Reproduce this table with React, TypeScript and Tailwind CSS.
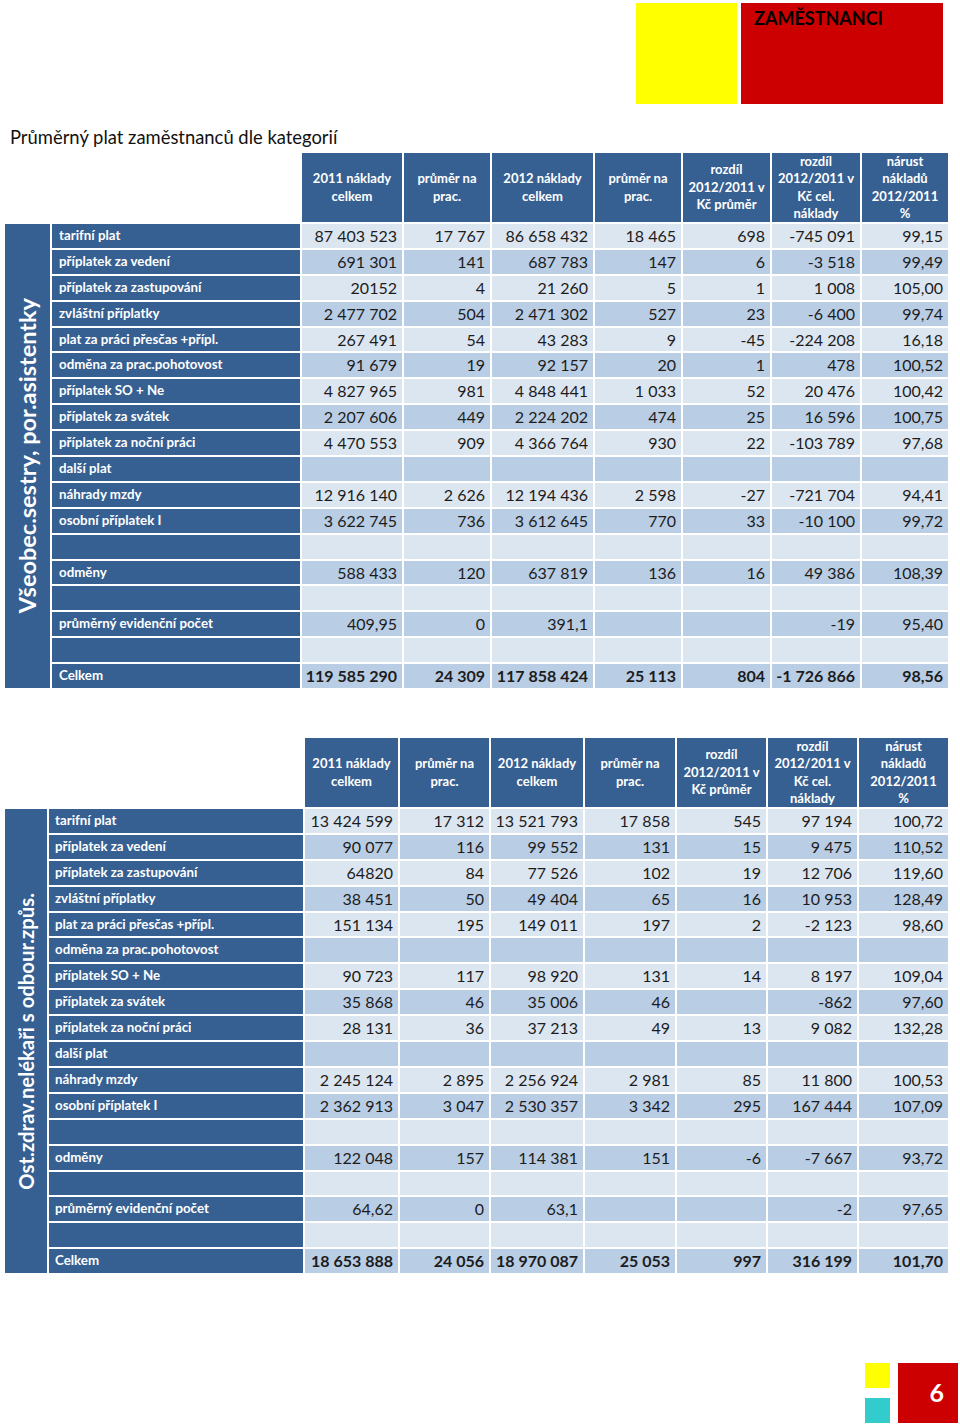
import React from 'react';

type Row = {
  label: string;
  values: string[];
  total?: boolean;
};

const NONE = ['', '', '', '', '', '', ''];

const nurses: Row[] = [
  { label: 'tarifní plat', values: ['87 403 523', '17 767', '86 658 432', '18 465', '698', '-745 091', '99,15'] },
  { label: 'příplatek za vedení', values: ['691 301', '141', '687 783', '147', '6', '-3 518', '99,49'] },
  { label: 'příplatek za zastupování', values: ['20152', '4', '21 260', '5', '1', '1 008', '105,00'] },
  { label: 'zvláštní příplatky', values: ['2 477 702', '504', '2 471 302', '527', '23', '-6 400', '99,74'] },
  { label: 'plat za práci přesčas +přípl.', values: ['267 491', '54', '43 283', '9', '-45', '-224 208', '16,18'] },
  { label: 'odměna za prac.pohotovost', values: ['91 679', '19', '92 157', '20', '1', '478', '100,52'] },
  { label: 'příplatek SO + Ne', values: ['4 827 965', '981', '4 848 441', '1 033', '52', '20 476', '100,42'] },
  { label: 'příplatek za svátek', values: ['2 207 606', '449', '2 224 202', '474', '25', '16 596', '100,75'] },
  { label: 'příplatek za noční práci', values: ['4 470 553', '909', '4 366 764', '930', '22', '-103 789', '97,68'] },
  { label: 'další plat', values: NONE },
  { label: 'náhrady mzdy', values: ['12 916 140', '2 626', '12 194 436', '2 598', '-27', '-721 704', '94,41'] },
  { label: 'osobní příplatek I', values: ['3 622 745', '736', '3 612 645', '770', '33', '-10 100', '99,72'] },
  { label: '', values: NONE },
  { label: 'odměny', values: ['588 433', '120', '637 819', '136', '16', '49 386', '108,39'] },
  { label: '', values: NONE },
  { label: 'průměrný evidenční počet', values: ['409,95', '0', '391,1', '', '', '-19', '95,40'] },
  { label: '', values: NONE },
  { label: 'Celkem', values: ['119 585 290', '24 309', '117 858 424', '25 113', '804', '-1 726 866', '98,56'], total: true },
];

const others: Row[] = [
  { label: 'tarifní plat', values: ['13 424 599', '17 312', '13 521 793', '17 858', '545', '97 194', '100,72'] },
  { label: 'příplatek za vedení', values: ['90 077', '116', '99 552', '131', '15', '9 475', '110,52'] },
  { label: 'příplatek za zastupování', values: ['64820', '84', '77 526', '102', '19', '12 706', '119,60'] },
  { label: 'zvláštní příplatky', values: ['38 451', '50', '49 404', '65', '16', '10 953', '128,49'] },
  { label: 'plat za práci přesčas +přípl.', values: ['151 134', '195', '149 011', '197', '2', '-2 123', '98,60'] },
  { label: 'odměna za prac.pohotovost', values: NONE },
  { label: 'příplatek SO + Ne', values: ['90 723', '117', '98 920', '131', '14', '8 197', '109,04'] },
  { label: 'příplatek za svátek', values: ['35 868', '46', '35 006', '46', '', '-862', '97,60'] },
  { label: 'příplatek za noční práci', values: ['28 131', '36', '37 213', '49', '13', '9 082', '132,28'] },
  { label: 'další plat', values: NONE },
  { label: 'náhrady mzdy', values: ['2 245 124', '2 895', '2 256 924', '2 981', '85', '11 800', '100,53'] },
  { label: 'osobní příplatek I', values: ['2 362 913', '3 047', '2 530 357', '3 342', '295', '167 444', '107,09'] },
  { label: '', values: NONE },
  { label: 'odměny', values: ['122 048', '157', '114 381', '151', '-6', '-7 667', '93,72'] },
  { label: '', values: NONE },
  { label: 'průměrný evidenční počet', values: ['64,62', '0', '63,1', '', '', '-2', '97,65'] },
  { label: '', values: NONE },
  { label: 'Celkem', values: ['18 653 888', '24 056', '18 970 087', '25 053', '997', '316 199', '101,70'], total: true },
];

const headers: string[][] = [
  ['2011 náklady', 'celkem'],
  ['průměr na', 'prac.'],
  ['2012 náklady', 'celkem'],
  ['průměr na', 'prac.'],
  ['rozdíl', '2012/2011 v', 'Kč průměr'],
  ['rozdíl', '2012/2011 v', 'Kč cel.', 'náklady'],
  ['nárust', 'nákladů', '2012/2011', '%'],
];

interface TableProps {
  title: string;
  titleClass: string;
  gridClass: string;
  labelPad: string;
  rows: Row[];
}

function CostTable({ title, titleClass, gridClass, labelPad, rows }: TableProps) {
  return <div className={gridClass}>
      <div className="col-span-2"></div>
      {headers.map((lines, i) => <div key={i} className="bg-[#376092] flex flex-col items-center justify-center text-white font-bold text-[13px] leading-[17.5px] text-center">
          {lines.map(l => <span key={l}>{l}</span>)}
        </div>)}
      <div className="row-span-18 bg-[#376092] flex items-center justify-center">
        <span className={titleClass}>{title}</span>
      </div>
      {rows.map((row, r) => <React.Fragment key={r}>
          <div className={`bg-[#376092] flex items-center text-white font-bold text-[13.3px] ${labelPad}`}>
            {row.label}
          </div>
          {row.values.map((v, c) => <div key={c} className={`${r % 2 === 0 ? 'bg-[#dce6f1]' : 'bg-[#b9cde5]'} flex items-center justify-end pr-[5px] text-[16px] text-[#1c1c1c] whitespace-nowrap ${row.total ? 'font-bold' : ''}`}>
              {v}
            </div>)}
        </React.Fragment>)}
    </div>;
}

export default function App() {
  return <div className="w-[960px] h-[1426px] bg-white font-['Lato',sans-serif] flex flex-col">
      <div className="flex justify-end gap-[4px] pt-[3px] pr-[17px]">
        <div className="w-[101px] h-[101px] bg-[#ffff00]"></div>
        <div className="w-[202px] h-[101px] bg-[#cc0000] pl-[13px] pt-[3px]">
          <span className="text-[18px] leading-[24px] font-bold text-black">ZAMĚSTNANCI</span>
        </div>
      </div>

      <h1 className="mt-[21px] pl-[10px] text-[18.4px] leading-[24px] text-[#111]">
        Průměrný plat zaměstnanců dle kategorií
      </h1>

      <div className="mt-[4px] pl-[5px]">
        <CostTable title="Všeobec.sestry, por.asistentky" titleClass="[writing-mode:vertical-rl] rotate-180 text-white font-bold text-[23.5px] whitespace-nowrap" gridClass="grid grid-cols-[45px_248px_100px_86px_101px_86px_87px_88px_86px] grid-rows-[69px_repeat(18,23.9px)] gap-[2px]" labelPad="pl-[7px]" rows={nurses} />
      </div>

      <div className="mt-[50px] pl-[5px]">
        <CostTable title="Ost.zdrav.nelékaři s odbour.způs." titleClass="[writing-mode:vertical-rl] rotate-180 text-white font-bold text-[20.3px] whitespace-nowrap" gridClass="grid grid-cols-[42px_254px_93px_89px_92px_90px_89px_89px_89px] grid-rows-[69px_repeat(18,23.9px)] gap-[2px]" labelPad="pl-[6px]" rows={others} />
      </div>

      <div className="mt-[90px] flex justify-end gap-[8px] pr-[2px]">
        <div className="flex flex-col gap-[10px]">
          <div className="w-[25px] h-[25px] bg-[#ffff00]"></div>
          <div className="w-[25px] h-[25px] bg-[#33cccc]"></div>
        </div>
        <div className="w-[60px] h-[60px] bg-[#cc0000] flex items-center justify-end pr-[14px]">
          <span className="text-white font-bold text-[25px]">6</span>
        </div>
      </div>
    </div>;
}
